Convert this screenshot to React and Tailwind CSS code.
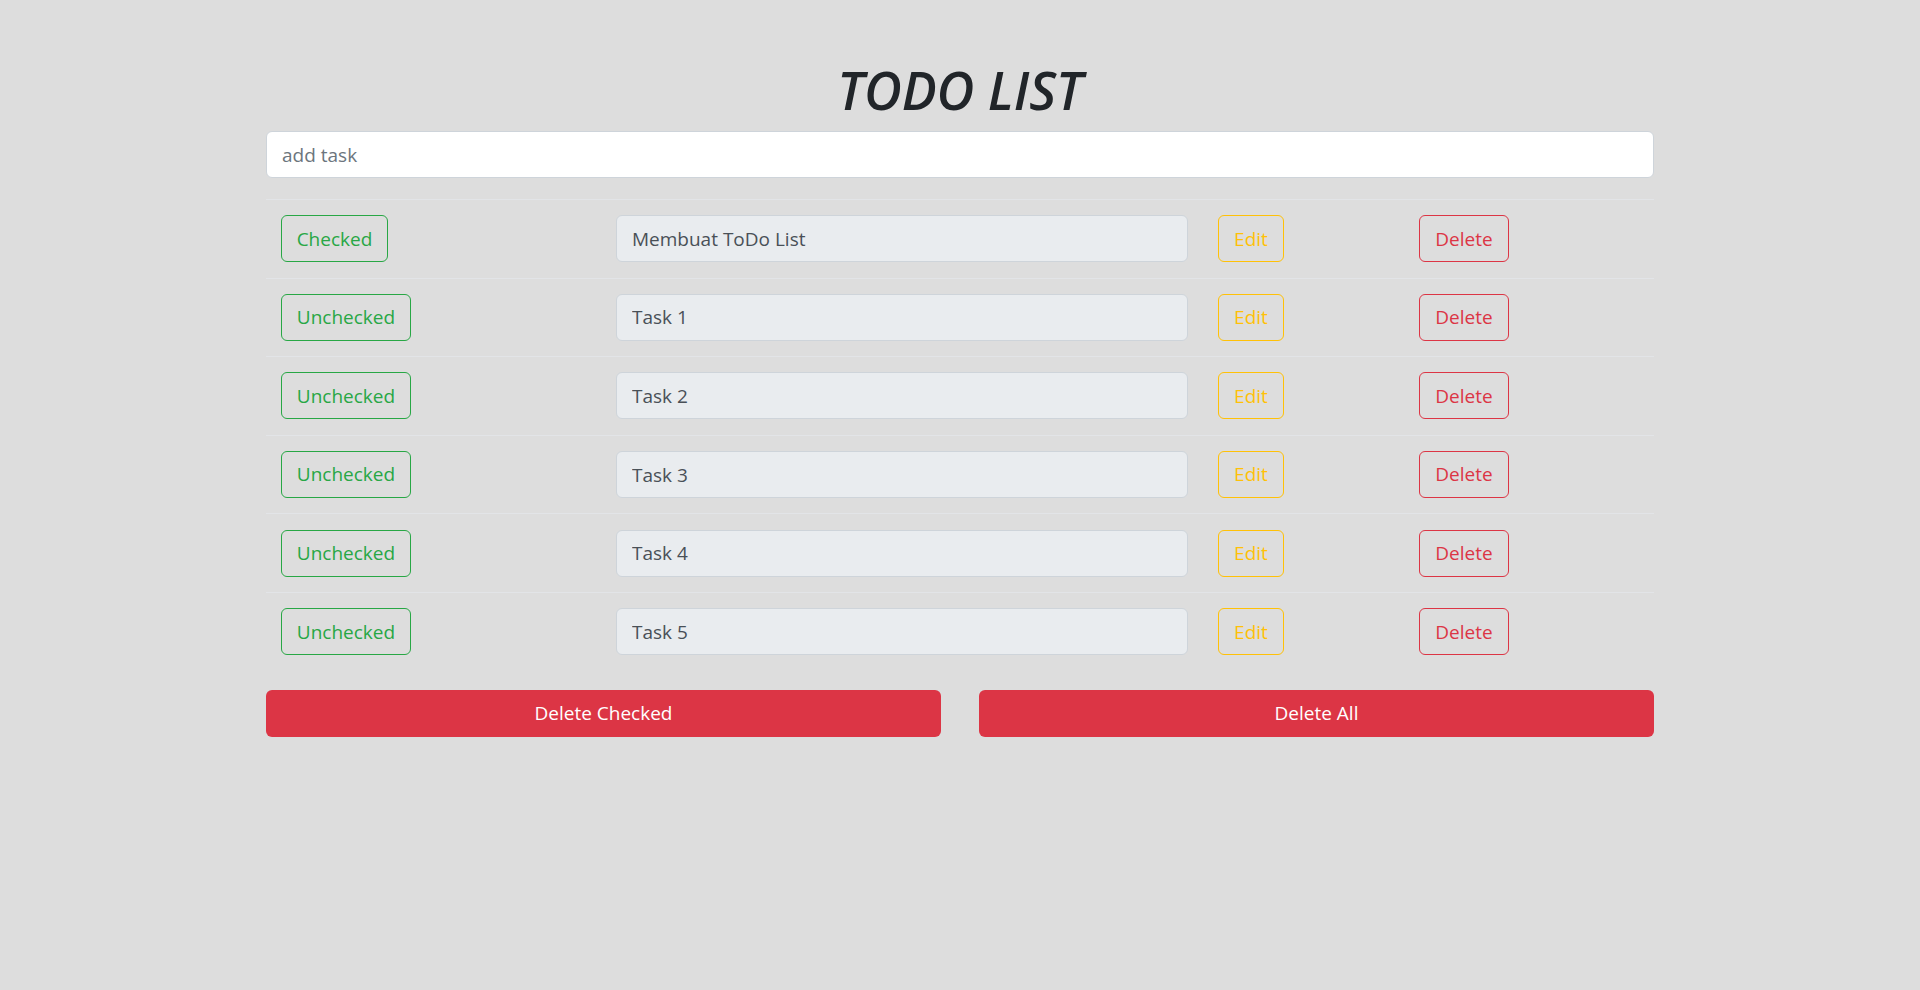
import React from 'react';

const tasks = [
  { id: 1, text: 'Membuat ToDo List', done: true },
  { id: 2, text: 'Task 1', done: false },
  { id: 3, text: 'Task 2', done: false },
  { id: 4, text: 'Task 3', done: false },
  { id: 5, text: 'Task 4', done: false },
  { id: 6, text: 'Task 5', done: false },
];

function TaskRow({ task }) {
  return (
    <div className="grid h-[78.6px] grid-cols-[335px_602px_201px_1fr] items-center border-t border-[#e2e4e7]">
      <div className="px-[15px]">
        <button
          className={`h-[47px] rounded-[6px] border border-[#28a745] text-[19px] text-[#28a745] ${
            task.done ? 'w-[107px]' : 'w-[130px]'
          }`}
        >
          {task.done ? 'Checked' : 'Unchecked'}
        </button>
      </div>
      <div className="px-[15px]">
        <input
          readOnly
          value={task.text}
          className="block h-[47px] w-full rounded-[6px] border border-[#ced4da] bg-[#e9ecef] px-[15px] text-[19px] text-[#495057] outline-none"
        />
      </div>
      <div className="px-[15px]">
        <button className="h-[47px] w-[66px] rounded-[6px] border border-[#ffc107] text-[19px] text-[#ffc107]">
          Edit
        </button>
      </div>
      <div className="px-[15px]">
        <button className="h-[47px] w-[90px] rounded-[6px] border border-[#dc3545] text-[19px] text-[#dc3545]">
          Delete
        </button>
      </div>
    </div>
  );
}

export default function App() {
  return (
    <div className="min-h-screen bg-[#dddddd] font-['Open_Sans',sans-serif]">
      <div className="mx-auto w-[1388px] pt-[58px]">
        <h1 className="text-center text-[52px] font-semibold italic leading-[64px] text-[#212529]">
          TODO LIST
        </h1>

        <input
          placeholder="add task"
          className="mt-[9px] block h-[47px] w-full rounded-[6px] border border-[#ced4da] bg-white px-[15px] text-[19px] text-[#212529] outline-none placeholder:text-[#6c757d]"
        />

        <div className="mt-[21px]">
          {tasks.map((task) => (
            <TaskRow key={task.id} task={task} />
          ))}
        </div>

        <div className="mt-[19px] grid grid-cols-2 gap-[38px]">
          <button className="h-[47px] rounded-[6px] bg-[#dc3545] text-[19px] text-white">
            Delete Checked
          </button>
          <button className="h-[47px] rounded-[6px] bg-[#dc3545] text-[19px] text-white">
            Delete All
          </button>
        </div>
      </div>
    </div>
  );
}
